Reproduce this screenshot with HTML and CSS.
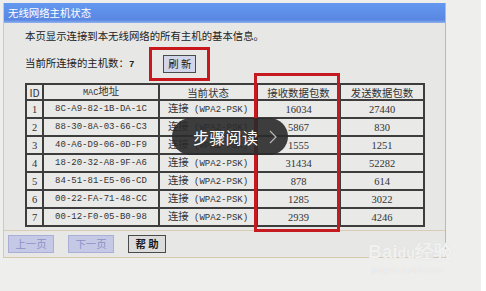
FILE: index.html
```html
<!DOCTYPE html>
<html lang="zh">
<head>
<meta charset="utf-8">
<title>无线网络主机状态</title>
<link rel="stylesheet" href="styles.css">
</head>
<body>
<div class="page">
  <div class="panel">
    <div class="title">无线网络主机状态</div>
    <div class="content">
      <p class="intro">本页显示连接到本无线网络的所有主机的基本信息。</p>
      <div class="count-row">
        <span class="count">当前所连接的主机数：<b class="num">7</b></span>
        <span class="mark"><button class="btn">刷 新</button></span>
      </div>
      <div class="table-wrap">
        <table class="hosts">
          <thead>
            <tr><th class="c-id">ID</th><th class="c-mac"><span class="mono">MAC</span>地址</th><th class="c-st">当前状态</th><th class="c-rx">接收数据包数</th><th class="c-tx">发送数据包数</th></tr>
          </thead>
          <tbody>
            <tr><td class="num">1</td><td class="mono">8C-A9-82-1B-DA-1C</td><td>连接<span class="mono"> (WPA2-PSK)</span></td><td class="num">16034</td><td class="num">27440</td></tr>
            <tr><td class="num">2</td><td class="mono">88-30-8A-03-66-C3</td><td>连接<span class="mono"> (WPA2-PSK)</span></td><td class="num">5867</td><td class="num">830</td></tr>
            <tr><td class="num">3</td><td class="mono">40-A6-D9-06-0D-F9</td><td>连接<span class="mono"> (WPA2-PSK)</span></td><td class="num">1555</td><td class="num">1251</td></tr>
            <tr><td class="num">4</td><td class="mono">18-20-32-A8-9F-A6</td><td>连接<span class="mono"> (WPA2-PSK)</span></td><td class="num">31434</td><td class="num">52282</td></tr>
            <tr><td class="num">5</td><td class="mono">84-51-81-E5-06-CD</td><td>连接<span class="mono"> (WPA2-PSK)</span></td><td class="num">878</td><td class="num">614</td></tr>
            <tr><td class="num">6</td><td class="mono">00-22-FA-71-48-CC</td><td>连接<span class="mono"> (WPA2-PSK)</span></td><td class="num">1285</td><td class="num">3022</td></tr>
            <tr><td class="num">7</td><td class="mono">00-12-F0-05-B0-98</td><td>连接<span class="mono"> (WPA2-PSK)</span></td><td class="num">2939</td><td class="num">4246</td></tr>
          </tbody>
        </table>
        <div class="col-mark"></div>
        <div class="step-pill"><span>步骤阅读</span><svg class="chev" width="8" height="14" viewBox="0 0 8 14"><polyline points="1,1 7,7 1,13" fill="none" stroke="#b8b8b8" stroke-width="1.2"/></svg></div>
      </div>
    </div>
    <div class="bar">
      <button class="btn dis">上一页</button>
      <button class="btn dis">下一页</button>
      <button class="btn help">帮 助</button>
    </div>
  </div>
  <div class="watermark"><div class="wm-top">Bai<span class="paw">du</span>经验</div><div class="wm-sub">jingyan.baidu.com</div></div>
</div>
</body>
</html>
```

FILE: styles.css
```css
* { box-sizing: border-box; }
html, body { margin: 0; padding: 0; }
body {
  background: #ffffff;
  font-family: "Noto Sans CJK SC", "Liberation Sans", sans-serif;
  font-size: 10.4px;
  color: #222;
  width: 486px;
  height: 291px;
  overflow: hidden;
}
.page {
  position: relative;
  width: 481px;
  height: 291px;
  background: #eeeeec;
  padding: 3px 0 0 3px;
}
.panel {
  width: 443px;
  height: 255px;
  display: flex;
  flex-direction: column;
  background: #e7e7e5;
  border-left: 1px solid #d6c8ac;
  border-right: 1px solid #c9b698;
  border-bottom: 1px solid #d6c8ac;
}
.title {
  height: 20px;
  line-height: 20px;
  padding-left: 4px;
  color: #fff;
  font-size: 10.4px;
  flex: none;
  background: linear-gradient(#6498ef, #5987e3 85%, #93b3ee);
}
.content {
  padding: 6px 0 0 21px;
  height: 208px;
  flex: none;
  border-bottom: 1px solid #d8ccb4;
}
.intro {
  margin: 0;
  line-height: 14px;
  height: 14px;
}
.count-row {
  display: flex;
  align-items: center;
  margin-top: 4px;
  height: 34px;
}
.count { line-height: 14px; }
.count .num { font-family: "Liberation Mono", monospace; font-size: 9px; font-weight: bold; }
.mark {
  margin-left: 15px;
  width: 61px;
  height: 34px;
  border: 3px solid #c8181e;
  display: flex;
  align-items: center;
  justify-content: center;
}
.btn {
  font-family: "Noto Sans CJK SC", sans-serif;
  font-size: 10.4px;
  line-height: 14px;
  height: 18px;
  padding: 0 4px;
  border: 1px solid #4a4a4a;
  background: #d3d6e8;
  color: #1a1a1a;
  margin: 0;
}
.table-wrap {
  position: relative;
  margin-top: 2px;
  width: 398px;
}
.hosts {
  border-collapse: collapse;
  width: 398px;
  table-layout: fixed;
  background: #e9e9e8;
}
.hosts th, .hosts td {
  border: 2px solid #3d3d3d;
  text-align: center;
  vertical-align: middle;
  padding: 0;
  font-weight: normal;
  white-space: nowrap;
  overflow: hidden;
  color: #333;
  line-height: 11px;
}
.hosts .mono { line-height: 11px; }
.hosts th .mono { font-size: 8.5px; }
.hosts thead tr { height: 16px; }
.hosts tbody tr { height: 18px; }
.c-id { width: 17px; }
.c-mac { width: 116px; }
.c-st { width: 98px; }
.c-rx { width: 83px; }
.c-tx { width: 84px; }
.mono { font-family: "Liberation Mono", monospace; font-size: 9px; }
td.num { font-family: "Liberation Serif", serif; font-size: 10.5px; }
.col-mark {
  position: absolute;
  left: 229px;
  top: -10px;
  width: 86px;
  height: 159px;
  border: 3px solid #c41a20;
}
.step-pill {
  position: absolute;
  left: 147px;
  top: 35px;
  width: 116px;
  height: 37px;
  border-radius: 18.5px;
  background: rgba(42, 42, 42, 0.9);
  display: flex;
  align-items: center;
  padding-left: 21px;
  color: #fff;
  font-size: 16px;
  letter-spacing: 0.3px;
}
.chev { margin-left: 11px; }
.bar {
  display: flex;
  align-items: center;
  gap: 14px;
  padding-left: 4px;
  height: 26px;
  flex: none;
}
.btn.dis {
  background: #c6c9e6;
  color: #8a92c4;
  border-color: #a9afd6;
  width: 46px;
}
.btn.help {
  background: #dcdcdc;
  font-weight: bold;
  width: 38px;
}
.watermark {
  position: absolute;
  left: 368px;
  top: 241px;
  color: rgba(255,255,255,0.7);
  text-shadow: 0 0 1px #d2d2d2;
  font-family: "Liberation Sans", sans-serif;
}
.wm-top { font-size: 19px; font-weight: bold; line-height: 22px; }
.wm-top .paw { font-size: 14px; }
.wm-sub { font-size: 9px; line-height: 12px; margin-left: 4px; }
```
